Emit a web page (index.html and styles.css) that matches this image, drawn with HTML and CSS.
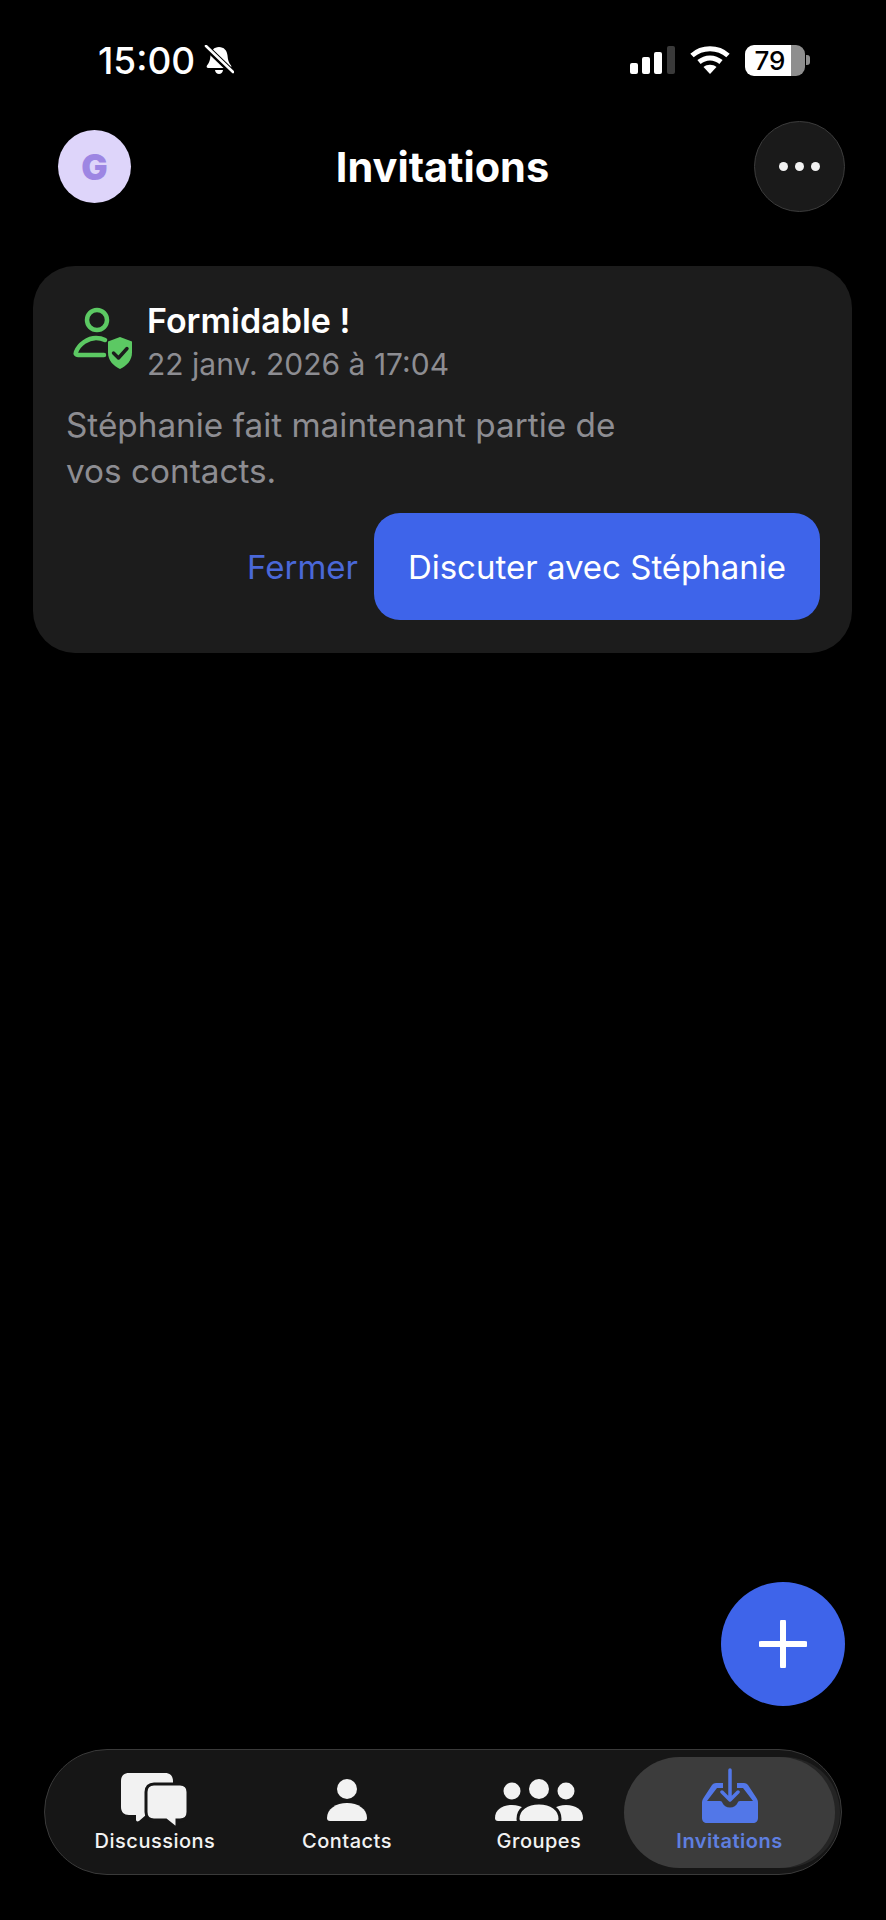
FILE: index.html
```html
<!DOCTYPE html>
<html lang="fr">

<head>
    <meta charset="UTF-8">
    <meta name="viewport" content="width=device-width, initial-scale=1.0">
    <title>Invitations</title>
    <link rel="stylesheet" href="styles.css">
</head>

<body>
    <div class="app">
        <div class="status-bar">
            <div class="status-left">
                <span class="clock">15:00</span>
                <svg class="bell" viewBox="0 0 30 30" width="30" height="30">
                    <path d="M15 2c-5 0-8 3.500-8.500 8.500-.4 4.500-1 7-3.500 10-.8 1-.2 2.500 1.200 2.500h21.600c1.400 0 2-1.500 1.200-2.500-2.500-3-3.100-5.500-3.500-10C23 5.500 20 2 15 2z" fill="#fff"/>
                    <path d="M11 25h8c-.3 2.500-2 4-4 4s-3.700-1.500-4-4z" fill="#fff"/>
                    <path d="M1 1l28 27" stroke="#000" stroke-width="6"/>
                    <path d="M2 1l27 26" stroke="#fff" stroke-width="2.600" stroke-linecap="round"/>
                </svg>
            </div>
            <div class="status-right">
                <svg class="signal" viewBox="0 0 45 28" width="45" height="28">
                    <rect x="0" y="17" width="8" height="11" rx="2" fill="#fff"/>
                    <rect x="12" y="11" width="8" height="17" rx="2" fill="#fff"/>
                    <rect x="24" y="6" width="8" height="22" rx="2" fill="#fff"/>
                    <rect x="37" y="0" width="8" height="28" rx="2" fill="#3a3a3a"/>
                </svg>
                <svg class="wifi" viewBox="0 0 40 28" width="40" height="28">
                    <path d="M2 9.500C12 .5 28 .5 38 9.500" fill="none" stroke="#fff" stroke-width="5"/>
                    <path d="M9 16c6.500-5.500 15.500-5.500 22 0" fill="none" stroke="#fff" stroke-width="5"/>
                    <path d="M13.500 21c3.500-3 9.500-3 13 0L20 28z" fill="#fff"/>
                </svg>
                <div class="battery">
                    <div class="battery-body">
                        <span class="battery-level">79</span>
                    </div>
                    <div class="battery-nub"></div>
                </div>
            </div>
        </div>

        <header class="top-bar">
            <div class="avatar">G</div>
            <h1 class="page-title">Invitations</h1>
            <div class="more-button">
                <span class="dot"></span>
                <span class="dot"></span>
                <span class="dot"></span>
            </div>
        </header>

        <main class="content">
            <section class="card">
                <div class="card-head">
                    <svg class="card-icon" viewBox="0 0 62 68" width="62" height="68">
                        <circle cx="25" cy="18" r="10" fill="none" stroke="#5cc963" stroke-width="4.500"/>
                        <path d="M33 38c-3-1.500-6-2-9-2-8 0-17 6-20 14-.8 2 .2 3 2 3h26" fill="none" stroke="#5cc963" stroke-width="4.500" stroke-linecap="round"/>
                        <path d="M48 35l12 4.500v11c0 8-5.500 13.500-12 16.500-6.500-3-12-8.500-12-16.500v-11z" fill="#5cc963"/>
                        <path d="M41.500 51l5 5 8.500-9.500" fill="none" stroke="#1c1c1c" stroke-width="3.400" stroke-linecap="round" stroke-linejoin="round"/>
                    </svg>
                    <div class="card-heading">
                        <div class="card-title">Formidable !</div>
                        <div class="card-date">22 janv. 2026 à 17:04</div>
                    </div>
                </div>
                <p class="card-text">Stéphanie fait maintenant partie de<br>vos contacts.</p>
                <div class="card-actions">
                    <a class="link-button">Fermer</a>
                    <a class="primary-button">Discuter avec Stéphanie</a>
                </div>
            </section>
        </main>

        <div class="fab-row">
            <div class="fab">
                <svg viewBox="0 0 48 48" width="48" height="48">
                    <path d="M24 2v44M2 24h44" stroke="#fff" stroke-width="6" stroke-linecap="round"/>
                </svg>
            </div>
        </div>

        <nav class="tab-bar">
            <div class="tab">
                <svg class="tab-icon" viewBox="0 0 68 56" width="68" height="56">
                    <path d="M8 2h36c5 0 8 3 8 8v26c0 5-3 8-8 8H25l-7 6c-1.500 1-3 .5-3-1.500V44H8c-5 0-8-3-8-8V10c0-5 3-8 8-8z" fill="#f2f2f2"/>
                    <path d="M33 13h26c5 0 8 3 8 8v20c0 5-3 8-8 8h-3v5c0 2-1.500 2.500-3 1.500L45 49H33c-5 0-8-3-8-8V21c0-5 3-8 8-8z" fill="#f2f2f2" stroke="#161616" stroke-width="3"/>
                </svg>
                <span class="tab-label">Discussions</span>
            </div>
            <div class="tab">
                <svg class="tab-icon" viewBox="0 0 68 56" width="68" height="56">
                    <circle cx="34" cy="18" r="10" fill="#f2f2f2"/>
                    <path d="M14 47c0-9 9-15 20-15s20 6 20 15c0 2-1 3-3 3H17c-2 0-3-1-3-3z" fill="#f2f2f2"/>
                </svg>
                <span class="tab-label">Contacts</span>
            </div>
            <div class="tab">
                <svg class="tab-icon" viewBox="0 0 90 56" width="90" height="56">
                    <circle cx="18" cy="20" r="8.500" fill="#f2f2f2"/>
                    <circle cx="72" cy="20" r="8.500" fill="#f2f2f2"/>
                    <path d="M1 47c0-8 7-13 17-13s17 5 17 13c0 2-1 3-3 3H4c-2 0-3-1-3-3z" fill="#f2f2f2"/>
                    <path d="M55 47c0-8 7-13 17-13s17 5 17 13c0 2-1 3-3 3H58c-2 0-3-1-3-3z" fill="#f2f2f2"/>
                    <circle cx="45" cy="18" r="10" fill="#f2f2f2"/>
                    <path d="M24 48c0-10 9-16 21-16s21 6 21 16c0 2-1 3.500-3 3.500H27c-2 0-3-1.500-3-3.500z" fill="#f2f2f2" stroke="#161616" stroke-width="3"/>
                </svg>
                <span class="tab-label">Groupes</span>
            </div>
            <div class="tab tab-active">
                <svg class="tab-icon" viewBox="0 0 68 56" width="68" height="56">
                    <path d="M27 16H20c-1.500 0-3 .7-4 2L7.500 31C6.500 32.500 6 34 6 36v15c0 3 2 5 5 5h46c3 0 5-2 5-5V36c0-2-.5-3.500-1.500-5L52 18c-1-1.300-2.500-2-4-2h-7v5h6l10 13H44c-1.500 0-2 .7-2.500 2-1 2.500-4 4.500-7.500 4.500s-6.500-2-7.500-4.500c-.5-1.300-1-2-2.500-2H11l10-13h6z" fill="#5277e8"/>
                    <path d="M34 3v30M26 25l8 8 8-8" fill="none" stroke="#5277e8" stroke-width="3.500" stroke-linecap="round" stroke-linejoin="round"/>
                </svg>
                <span class="tab-label">Invitations</span>
            </div>
        </nav>
    </div>
</body>

</html>
```

FILE: styles.css
```css
body {
    margin: 0;
    background-color: black;
    color: white;
    font-family: Inter, "Noto Sans", sans-serif;
}

.app {
    height: 1920px;
    display: flex;
    flex-direction: column;
    overflow: hidden;
}

/* status bar */
.status-bar {
    display: flex;
    justify-content: space-between;
    align-items: center;
    height: 40px;
    padding: 40px 76px 0 98px;
}

.status-left {
    display: flex;
    align-items: center;
    gap: 9px;
}

.clock {
    font-size: 37px;
    font-weight: 500;
}

.status-right {
    display: flex;
    align-items: center;
}

.wifi {
    margin-left: 15px;
}

.battery {
    display: flex;
    align-items: center;
    margin-left: 15px;
}

.battery-body {
    width: 60px;
    height: 31px;
    border-radius: 9px;
    background: linear-gradient(to right, #fff 46px, #8e8e8e 46px);
    overflow: hidden;
}

.battery-level {
    display: block;
    width: 46px;
    text-align: center;
    margin-left: 2px;
    color: black;
    font-size: 26px;
    font-weight: 500;
    line-height: 31px;
}

.battery-nub {
    width: 4px;
    height: 10px;
    margin-left: 1px;
    border-radius: 0 3px 3px 0;
    background-color: #8e8e8e;
}

/* header */
.top-bar {
    display: flex;
    justify-content: space-between;
    align-items: center;
    height: 91px;
    margin-top: 41px;
    padding: 0 41px 0 58px;
}

.avatar {
    width: 73px;
    height: 73px;
    border-radius: 50%;
    display: flex;
    justify-content: center;
    align-items: center;
    background-color: #ded5fa;
    color: #9d86e3;
    font-size: 35px;
    font-weight: 900;
}

.page-title {
    margin: 0;
    font-size: 41.5px;
    font-weight: 700;
}

.more-button {
    width: 89px;
    height: 89px;
    border: 1px solid #3c3c3c;
    border-radius: 50%;
    display: flex;
    justify-content: center;
    align-items: center;
    gap: 7px;
    background-color: #1a1a1a;
}

.dot {
    width: 9px;
    height: 9px;
    border-radius: 50%;
    background-color: #f2f2f2;
}

/* card */
.content {
    flex: 1;
    padding: 54px 34px 0 33px;
}

.card {
    padding: 35px 32px 33px 33px;
    border-radius: 42px;
    background-color: #1c1c1c;
}

.card-head {
    display: flex;
    gap: 13px;
    padding-left: 6px;
}

.card-icon {
    margin-top: 1px;
}

.card-title {
    font-size: 34px;
    font-weight: 600;
    line-height: 40px;
}

.card-date {
    margin-top: 3px;
    color: #8d8d92;
    font-size: 30px;
    line-height: 40px;
}

.card-text {
    margin: 18px 0 0 0;
    color: #8d8d92;
    font-size: 33.3px;
    line-height: 46px;
}

.card-actions {
    display: flex;
    justify-content: flex-end;
    align-items: center;
    gap: 16px;
    margin-top: 19px;
}

.link-button {
    color: #4a68d8;
    font-size: 33px;
}

.primary-button {
    display: flex;
    justify-content: center;
    align-items: center;
    width: 446px;
    height: 107px;
    border-radius: 26px;
    background-color: #3e64ea;
    color: white;
    font-size: 33px;
}

/* floating button */
.fab-row {
    display: flex;
    justify-content: flex-end;
    padding-right: 41px;
}

.fab {
    width: 124px;
    height: 124px;
    border-radius: 50%;
    display: flex;
    justify-content: center;
    align-items: center;
    background-color: #3e64ea;
}

/* bottom tabs */
.tab-bar {
    display: flex;
    align-items: center;
    height: 124px;
    margin: 43px 44px 45px 44px;
    padding: 0 0 0 14px;
    border: 1px solid #3a3a3a;
    border-radius: 63px;
    background-color: #161616;
}

.tab {
    flex: 0 0 192px;
    height: 111px;
    display: flex;
    flex-direction: column;
    align-items: center;
    justify-content: center;
    gap: 1px;
    border-radius: 56px;
}

.tab-icon {
    display: block;
}

.tab-label {
    color: #f2f2f2;
    font-size: 20px;
    font-weight: 500;
    letter-spacing: 0.5px;
    line-height: 26px;
}

.tab-active {
    flex-basis: 211px;
    margin-left: -11px;
    background-color: #3c3c3c;
    box-shadow: 5px 0 0 #242424;
}

.tab-active .tab-icon {
    margin: -4px 0 4px 0;
}

.tab-active .tab-label {
    color: #5f7fe0;
    font-weight: 600;
}
```
